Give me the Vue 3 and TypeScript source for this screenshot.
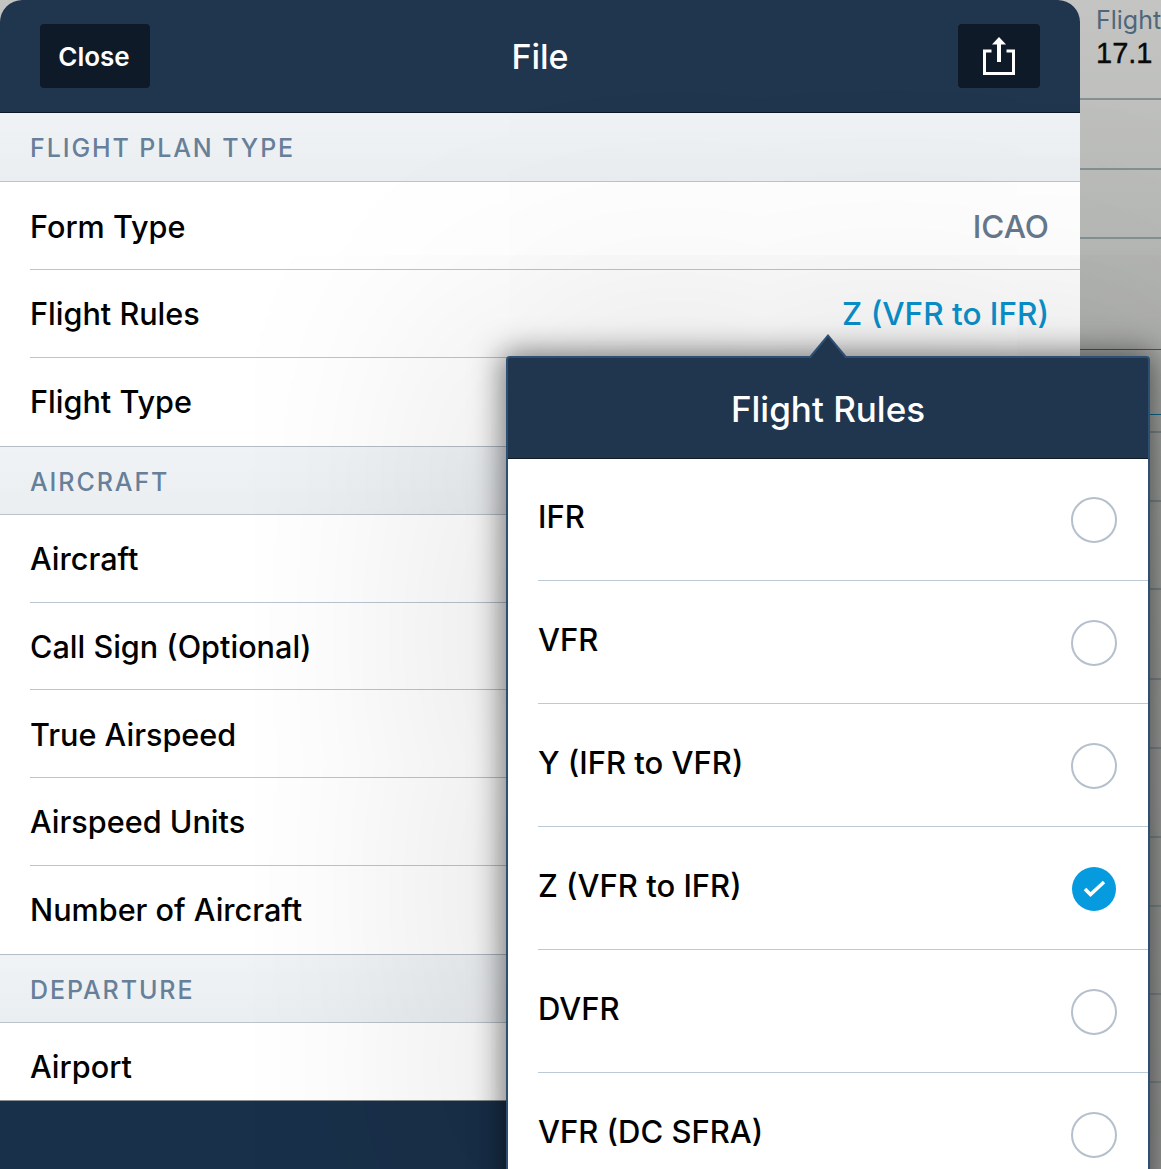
<script setup lang="ts">
interface Row {
  label: string
  value?: string
  blue?: boolean
}
interface Section {
  title: string
  rows: Row[]
}

const sections: Section[] = [
  {
    title: 'FLIGHT PLAN TYPE',
    rows: [
      { label: 'Form Type', value: 'ICAO' },
      { label: 'Flight Rules', value: 'Z (VFR to IFR)', blue: true },
      { label: 'Flight Type' },
    ],
  },
  {
    title: 'AIRCRAFT',
    rows: [
      { label: 'Aircraft' },
      { label: 'Call Sign (Optional)' },
      { label: 'True Airspeed' },
      { label: 'Airspeed Units' },
      { label: 'Number of Aircraft' },
    ],
  },
  {
    title: 'DEPARTURE',
    rows: [{ label: 'Airport' }],
  },
]

const options = ['IFR', 'VFR', 'Y (IFR to VFR)', 'Z (VFR to IFR)', 'DVFR', 'VFR (DC SFRA)']
const selected = 'Z (VFR to IFR)'

const bgLines = [98, 168, 237, 431, 500, 588, 678, 747, 836, 905, 993, 1081]
</script>

<template>
  <div class="screen">
    <div class="backdrop">
      <div class="stat">
        <div class="stat-label">Flight</div>
        <div class="stat-value">17.1</div>
      </div>
      <div v-for="y in bgLines" :key="y" class="bg-line" :style="{ top: y + 'px' }"></div>
      <div class="bg-line blue" style="top: 349px"></div>
      <div class="bg-line blue" style="top: 414px"></div>
    </div>

    <div class="sheet">
      <header class="sheet-head">
        <button class="head-btn close">Close</button>
        <div class="sheet-title">File</div>
        <button class="head-btn share" aria-label="Share">
          <svg width="34" height="40" viewBox="0 0 34 40">
            <path d="M9.5 15H2.5V37.5H31.5V15H24.5" fill="none" stroke="#fff" stroke-width="3" />
            <path d="M17 8V26" stroke="#fff" stroke-width="4" />
            <path d="M17 1L24 8.5H10Z" fill="#fff" />
          </svg>
        </button>
      </header>

      <div class="list">
        <template v-for="section in sections" :key="section.title">
          <div class="section-head">{{ section.title }}</div>
          <div v-for="row in section.rows" :key="row.label" class="row">
            <span class="row-label">{{ row.label }}</span>
            <span v-if="row.value" class="row-value" :class="{ blue: row.blue }">{{ row.value }}</span>
          </div>
        </template>
      </div>

      <footer class="sheet-foot"></footer>
    </div>

    <div class="popover">
      <div class="pop-arrow"></div>
      <div class="pop-head">Flight Rules</div>
      <div class="pop-list">
        <div v-for="opt in options" :key="opt" class="pop-row">
          <span class="pop-label">{{ opt }}</span>
          <span v-if="opt === selected" class="radio on">
            <svg width="24" height="20" viewBox="0 0 24 20">
              <path d="M3 10L8.5 15.5L22 3" fill="none" stroke="#fff" stroke-width="3.5" />
            </svg>
          </span>
          <span v-else class="radio"></span>
        </div>
      </div>
    </div>
  </div>
</template>

<style>
html,
body {
  margin: 0;
  background: #aeb1ae;
}
</style>

<style scoped>
.screen {
  position: relative;
  width: 1161px;
  height: 1169px;
  overflow: hidden;
  font-family: Inter, "Liberation Sans", Arial, sans-serif;
  color: #000;
}

.backdrop {
  position: absolute;
  inset: 0;
  background: linear-gradient(180deg, #c4c5c2 0, #b7b9b6 20%, #a9aca9 40%, #9fa19f 100%);
}

.stat {
  position: absolute;
  left: 1096px;
  top: 4px;
}

.stat-label {
  font-size: 25px;
  line-height: 32px;
  color: #50667a;
  white-space: nowrap;
}

.stat-value {
  font-family: "Liberation Sans", Arial, sans-serif;
  font-size: 29px;
  line-height: 34px;
  -webkit-text-stroke: 0.4px #0a0a0a;
  color: #0a0a0a;
}

.bg-line {
  position: absolute;
  left: 1080px;
  right: 0;
  height: 2px;
  background: #859092;
}

.bg-line.blue {
  height: 1px;
  background: #0f6f95;
}

.sheet {
  position: relative;
  width: 1080px;
  height: 1169px;
  display: flex;
  flex-direction: column;
  border-radius: 22px 22px 0 0;
  overflow: hidden;
  background: #fff;
}

.sheet-head {
  flex: none;
  height: 113px;
  box-sizing: border-box;
  display: flex;
  align-items: center;
  justify-content: space-between;
  padding: 0 40px;
  background: #20364f;
  border-bottom: 1px solid #0f1a28;
  position: relative;
}

.head-btn {
  height: 64px;
  border: 0;
  padding: 0;
  border-radius: 4px;
  background: #0e1a27;
  color: #fff;
  font-family: inherit;
  font-size: 26px;
  font-weight: 600;
  display: flex;
  align-items: center;
  justify-content: center;
}

.close {
  width: 110px;
  padding-right: 2px;
}

.share {
  width: 82px;
}

.sheet-title {
  position: absolute;
  left: 0;
  top: 37px;
  width: 1080px;
  text-align: center;
  color: #fff;
  font-size: 34px;
  line-height: 40px;
  font-weight: 500;
}

.list {
  flex: none;
  height: 987px;
  overflow: hidden;
}

.section-head {
  height: 69.25px;
  box-sizing: border-box;
  border-bottom: 1px solid #bcc4cb;
  border-top: 1px solid #b4bcc4;
  background: linear-gradient(180deg, #f0f3f6, #ebeef1);
  padding-left: 30px;
  line-height: 70px;
  font-size: 25px;
  font-weight: 550;
  letter-spacing: 1.9px;
  color: #67809a;
}

.section-head:first-child {
  border-top: 0;
}

.row {
  height: 87.75px;
  box-sizing: border-box;
  display: flex;
  align-items: center;
  justify-content: space-between;
  padding: 0 31px 0 30px;
  background: #fff;
  position: relative;
  font-size: 30.6px;
  font-weight: 450;
}

.row + .row::before {
  content: "";
  position: absolute;
  left: 30px;
  right: 0;
  top: -1px;
  height: 1px;
  background: #b9c5d0;
}

.row-value {
  font-size: 31.5px;
  color: #66788a;
}

.row-value.blue {
  color: #0a93cf;
}

.sheet-foot {
  flex: 1;
  background: #19304a;
  border-top: 1px solid #8a8f94;
}

.popover {
  position: absolute;
  left: 506px;
  top: 356px;
  width: 644px;
  height: 840px;
  box-sizing: border-box;
  border: 2px solid #2d4f74;
  border-radius: 4px 4px 0 0;
  background: #20364f;
  box-shadow: 0 0 30px 4px rgba(0, 0, 0, 0.5), 0 0 260px 40px rgba(0, 0, 0, 0.14);
}

.pop-arrow {
  position: absolute;
  left: 300px;
  top: -24px;
  width: 0;
  height: 0;
  border-left: 20px solid transparent;
  border-right: 20px solid transparent;
  border-bottom: 24px solid #2d4f74;
}

.pop-arrow::after {
  content: "";
  position: absolute;
  left: -18px;
  top: 3px;
  width: 0;
  height: 0;
  border-left: 18px solid transparent;
  border-right: 18px solid transparent;
  border-bottom: 22px solid #20364f;
}

.pop-head {
  height: 100px;
  line-height: 102px;
  text-align: center;
  color: #fff;
  font-size: 35px;
  font-weight: 500;
  border-bottom: 1px solid #0f1a28;
}

.pop-list {
  background: #fff;
  height: 736px;
  padding-left: 30px;
}

.pop-row {
  height: 120px;
  padding-top: 2px;
  display: flex;
  align-items: center;
  justify-content: space-between;
  padding-right: 31px;
  border-bottom: 1px solid #bccad6;
  font-size: 31px;
  font-weight: 450;
}

.pop-row:first-child {
  height: 120px;
  padding-top: 1px;
}

.pop-label {
  position: relative;
  top: -4px;
}

.radio {
  width: 42px;
  height: 42px;
  border: 2px solid #b5c0cc;
  border-radius: 50%;
  display: flex;
  align-items: center;
  justify-content: center;
}

.radio.on {
  width: 44px;
  height: 44px;
  margin: 1px;
  border: 0;
  background: #069bdf;
}
</style>
